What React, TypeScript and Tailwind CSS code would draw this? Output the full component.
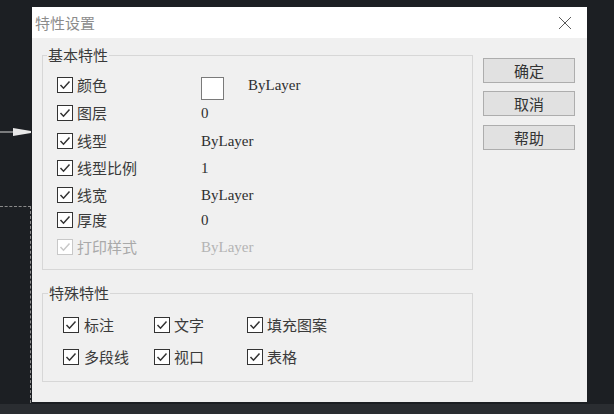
import React from "react";

type Row = { label: string; value?: string; swatch?: boolean; disabled?: boolean; h: string };

const basicRows: Row[] = [
  { label: "颜色", value: "ByLayer", swatch: true, h: "h-[28px]" },
  { label: "图层", value: "0", h: "h-[28px]" },
  { label: "线型", value: "ByLayer", h: "h-[27px]" },
  { label: "线型比例", value: "1", h: "h-[28px]" },
  { label: "线宽", value: "ByLayer", h: "h-[25px]" },
  { label: "厚度", value: "0", h: "h-[26px]" },
  { label: "打印样式", value: "ByLayer", disabled: true, h: "h-[27px]" },
];

const specialRows = [
  ["标注", "文字", "填充图案"],
  ["多段线", "视口", "表格"],
];

function Check({ disabled }: { disabled?: boolean }) {
  return (
    <span
      className={`flex w-4 h-4 shrink-0 items-center justify-center border bg-white ${
        disabled ? "border-[#c8c8c8]" : "border-[#333333]"
      }`}
    >
      <svg width="12" height="12" viewBox="0 0 12 12" fill="none">
        <polyline
          points="1.5,6 4.5,9.2 10.5,2.5"
          stroke={disabled ? "#c8c8c8" : "#333333"}
          strokeWidth="1.5"
        />
      </svg>
    </span>
  );
}

export default function App() {
  return (
    <div className="relative w-[614px] h-[414px] overflow-hidden bg-[#1c1f23] font-['Noto_Sans_CJK_SC',sans-serif]">
      {/* drawing on the canvas behind the dialog */}
      <svg className="absolute left-0 top-[126px]" width="32" height="12" viewBox="0 0 32 12">
        <line x1="0" y1="6" x2="14" y2="6" stroke="#d8d8d8" strokeWidth="1" />
        <polygon points="13,2 31,5 31,7 13,10" fill="#e8e8e8" />
      </svg>
      <div className="absolute left-0 top-[206px] w-[31px] border-t border-dashed border-[#8a8a8a]" />
      <div className="absolute left-[30px] top-[206px] h-[197px] border-l border-dashed border-[#8a8a8a]" />

      {/* dialog */}
      <div className="ml-[32px] mt-[7px] w-[555px] flex flex-col">
        <div className="h-[31px] bg-white flex items-center justify-between pl-[3px] pr-[15px]">
          <span className="text-[15px] leading-[20px] text-[#8c8c8c]">特性设置</span>
          <svg width="14" height="14" viewBox="0 0 14 14">
            <path d="M1 1 L13 13 M13 1 L1 13" stroke="#5a5a5a" strokeWidth="1" />
          </svg>
        </div>

        <div className="h-[364px] bg-[#f0f0f0] flex pl-[10px] pt-[17px] gap-[10px] text-[#333333]">
          <div className="flex flex-col">
            {/* 基本特性 */}
            <div className="relative w-[431px] h-[215px] border border-[#d7d7d7] pt-[15px] pl-[14px]">
              <span className="absolute -top-[11px] left-[4px] px-[1px] bg-[#f0f0f0] text-[15px] leading-[20px] text-[#3a3a3a]">
                基本特性
              </span>
              {basicRows.map((r) => (
                <div key={r.label} className={`flex items-center ${r.h}`}>
                  <Check disabled={r.disabled} />
                  <span
                    className={`ml-[4px] w-[124px] text-[15px] leading-[20px] ${
                      r.disabled ? "text-[#a9a9a9]" : "text-[#3a3a3a]"
                    }`}
                  >
                    {r.label}
                  </span>
                  {r.swatch && (
                    <span className="self-start mt-[6px] w-[23px] h-[23px] bg-white border border-[#7a7a7a] mr-[24px]" />
                  )}
                  <span
                    className={`font-['Liberation_Serif',serif] text-[15px] leading-[20px] ${
                      r.disabled ? "text-[#b4b4b4]" : "text-[#2e2e2e]"
                    }`}
                  >
                    {r.value}
                  </span>
                </div>
              ))}
            </div>

            {/* 特殊特性 */}
            <div className="relative mt-[23px] w-[431px] h-[89px] border border-[#d7d7d7] pt-[15px] pl-[20px]">
              <span className="absolute -top-[11px] left-[5px] px-[1px] bg-[#f0f0f0] text-[15px] leading-[20px] text-[#3a3a3a]">
                特殊特性
              </span>
              {specialRows.map((row, i) => (
                <div key={i} className="grid grid-cols-[91px_93px_1fr] h-[32px] items-center">
                  {row.map((label, j) => (
                    <div key={label} className="flex items-center">
                      <Check />
                      <span
                        className={`${j === 0 ? "ml-[5px]" : "ml-[4px]"} text-[15px] leading-[20px] text-[#3a3a3a]`}
                      >
                        {label}
                      </span>
                    </div>
                  ))}
                </div>
              ))}
            </div>
          </div>

          <div className="flex flex-col pt-[3px]">
            {["确定", "取消", "帮助"].map((t, i) => (
              <button
                key={t}
                className={`w-[92px] h-[25px] bg-[#e1e1e1] border border-[#adadad] text-[15px] leading-[20px] text-[#333333] ${
                  i === 1 ? "mt-[8px]" : i === 2 ? "mt-[9px]" : ""
                }`}
              >
                {t}
              </button>
            ))}
          </div>
        </div>
      </div>

      <div className="mt-[2px] h-[10px] bg-[#2a2d31]" />
    </div>
  );
}
